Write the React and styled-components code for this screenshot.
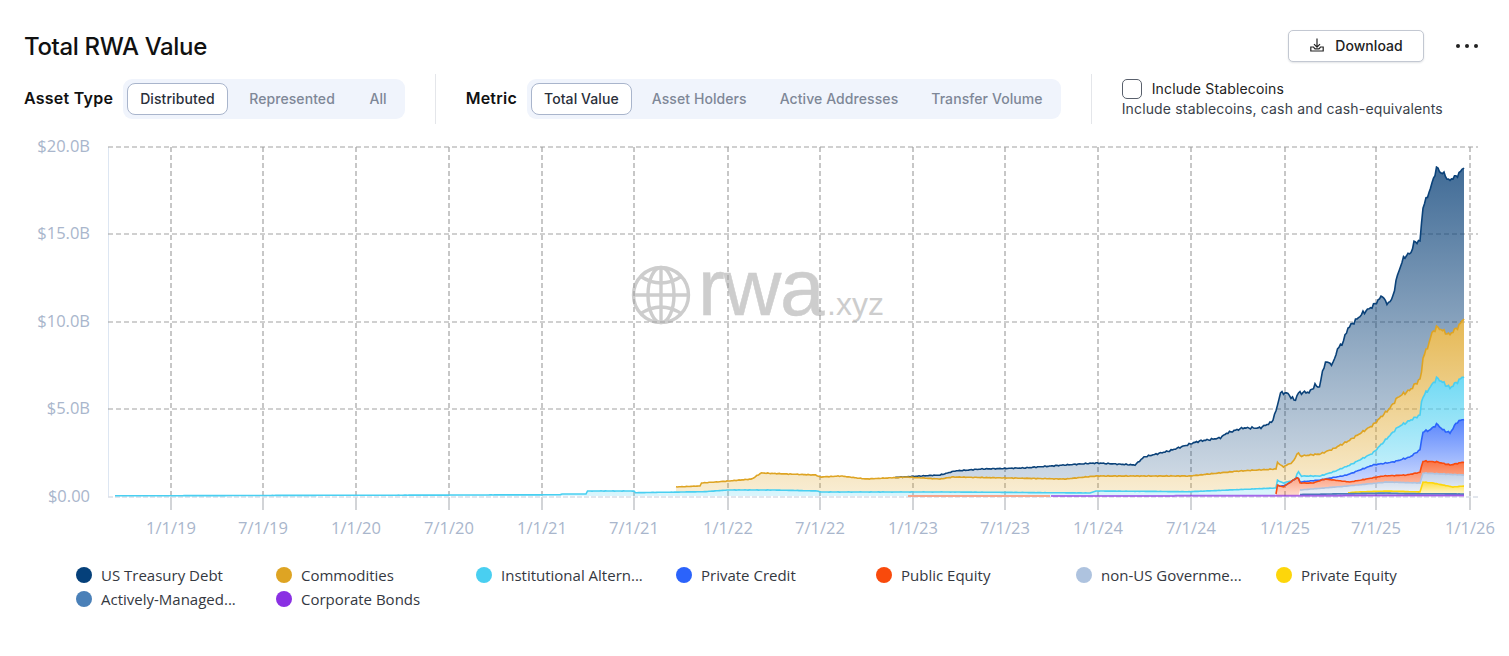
import React from 'react';
import styled, { createGlobalStyle } from 'styled-components';

const GlobalStyle = createGlobalStyle`
  html, body { margin: 0; background: #fff; overflow: hidden; }
  body { font-family: Inter, "Liberation Sans", sans-serif; color: #111; }
`;

const Card = styled.div`
  width: 1509px;
  height: 656px;
  background: #fff;
  padding-top: 30px;
  box-sizing: border-box;
`;

const TopRow = styled.div`
  display: flex;
  align-items: center;
  justify-content: space-between;
  height: 32px;
  padding: 0 30px 0 24px;
`;

const Title = styled.h1`
  margin: 0;
  font-size: 24px;
  font-weight: 500;
  letter-spacing: -0.35px;
`;

const Actions = styled.div`
  display: flex;
  align-items: center;
  gap: 31px;
`;

const DownloadButton = styled.button`
  display: flex;
  align-items: center;
  justify-content: center;
  gap: 10px;
  width: 136px;
  height: 32px;
  padding: 0 0 2px;
  background: #fff;
  border: 1px solid #c3c8d2;
  border-radius: 5px;
  box-shadow: 0 1px 2px rgba(20, 30, 50, 0.12);
  font: 500 14px Inter, sans-serif;
  letter-spacing: 0.05px;
  color: #222;
`;

const Controls = styled.div`
  display: flex;
  align-items: center;
  height: 50px;
  margin-top: 12px;
  padding-left: 24px;
`;

const FilterGroup = styled.div`
  display: flex;
  align-items: center;
  gap: 10px;
`;

const FilterLabel = styled.span`
  padding-bottom: 2px;
  font-size: 16px;
  font-weight: 600;
  letter-spacing: 0.25px;
  white-space: nowrap;
`;

const Tabs = styled.div`
  display: flex;
  align-items: center;
  gap: ${p => p.$gap || 7}px;
  height: 40px;
  padding: 0 5px 0 4px;
  background: #f0f4fc;
  border-radius: 9px;
  box-sizing: border-box;
`;

const Tab = styled.button`
  height: 32px;
  padding: 0 12px 2px;
  box-sizing: border-box;
  background: ${p => (p.$active ? '#fff' : 'transparent')};
  border: 1px solid ${p => (p.$active ? '#a9b5cc' : 'transparent')};
  border-radius: 8px;
  font: 500 14px Inter, sans-serif;
  letter-spacing: 0.08px;
  color: ${p => (p.$active ? '#2a2f3a' : '#7e8797')};
  white-space: nowrap;
`;

const Divider = styled.div`
  width: 1px;
  height: 50px;
  margin: 0 30px;
  background: #e4e6ea;
`;

const StableBlock = styled.div`
  display: flex;
  flex-direction: column;
  font-size: 14px;
  letter-spacing: 0.16px;
  color: #3a3f4a;
`;

const StableRow = styled.label`
  display: flex;
  align-items: center;
  gap: 10px;
  height: 20px;
  color: #222;
`;

const StableLabel = styled.span`
  margin-bottom: 2px;
`;

const Check = styled.input.attrs({ type: 'checkbox' })`
  appearance: none;
  width: 20px;
  height: 20px;
  margin: 0;
  background: #fff;
  border: 1px solid #59606c;
  border-radius: 5px;
`;

const StableHint = styled.div`
  line-height: 20px;
`;

const ChartSvg = styled.svg`
  display: block;
  margin-top: 6px;
`;

const AxisText = styled.text`
  font-family: "Open Sans", sans-serif;
  font-size: 16.5px;
  font-weight: 400;
  fill: #a9b6cc;
`;

const Legend = styled.div`
  display: grid;
  grid-template-columns: repeat(7, 200px);
  grid-auto-rows: 24px;
  margin-top: 23px;
  padding-left: 76px;
`;

const LegendItem = styled.div`
  display: flex;
  align-items: center;
  gap: 9px;
  font-family: "Open Sans", sans-serif;
  font-size: 15px;
  color: #34383f;
  white-space: nowrap;
`;

const Dot = styled.span`
  width: 16px;
  height: 16px;
  border-radius: 50%;
  background: ${p => p.$color};
`;

const X_RIGHT = 1464;
const BASE = 496;

// ordered bottom of the stack first
const series = [
  { name: 'Corporate Bonds', color: '#8a30e3', start: 1050, pts: [[1050, 496], [X_RIGHT, 495.5]] },
  { name: 'Actively-Managed', color: '#4a80b8', start: 1300, pts: [[1300, 494.5], [1387, 493], [1400, 493.5], [X_RIGHT, 494]] },
  { name: 'Private Equity', color: '#fdd60b', start: 1347, pts: [[1347, 493], [1357, 492], [1387, 491], [1421, 492], [1422, 482], [1433, 483], [1453, 487], [X_RIGHT, 486]] },
  { name: 'non-US', color: '#aec3df', start: 1300, pts: [[1300, 490], [1347, 486], [1387, 482], [1421, 483], [1422, 473], [X_RIGHT, 475]] },
  { name: 'Public Equity', color: '#f94a0c', start: 1276, pts: [[1276, 494], [1277, 485], [1283, 487], [1298, 477], [1300, 483], [1313, 483], [1325, 479], [1350, 482], [1383, 476], [1407, 475], [1421, 472], [1422, 461], [1437, 462], [1450, 465], [X_RIGHT, 462]] },
  { name: 'Private Credit', color: '#2b63fb', start: 1277, pts: [[1277, 487], [1300, 482], [1320, 480], [1347, 475], [1373, 465], [1393, 462], [1410, 457], [1421, 449], [1422, 432], [1430, 430], [1437, 424], [1443, 430], [1450, 433], [1457, 422], [X_RIGHT, 419]] },
  { name: 'Institutional', color: '#49cff1', start: 115, pts: [[115, 495.8], [560, 494.8], [562, 494], [586, 494], [587, 491], [634, 491], [635, 492.7], [704, 491.7], [729, 490], [774, 490], [818, 491], [820, 492], [957, 492], [1090, 493], [1096, 491], [1189, 491.7], [1276, 488], [1277, 480], [1283, 483], [1295, 480], [1298, 471], [1301, 476], [1320, 476], [1333, 472], [1350, 465], [1373, 453], [1398, 427], [1420, 415], [1422, 398], [1437, 378], [1450, 388], [X_RIGHT, 376]] },
  { name: 'Commodities', color: '#dea423', start: 675, pts: [[675, 487], [700, 486], [701, 483], [729, 481], [752, 479], [761, 473], [816, 475], [820, 477], [841, 476], [866, 479], [907, 477], [940, 479], [953, 477], [1065, 479], [1096, 476], [1189, 476], [1239, 471], [1276, 469], [1277, 462], [1283, 467], [1293, 462], [1298, 452], [1300, 456], [1320, 454], [1333, 449], [1350, 440], [1373, 425], [1390, 408], [1398, 397], [1410, 390], [1421, 378], [1423, 357], [1427, 349], [1432, 333], [1437, 327], [1445, 332], [1449, 335], [1458, 327], [X_RIGHT, 318]] },
  { name: 'US Treasury Debt', color: '#0b4279', start: 895, pts: [[895, 477.5], [920, 476], [940, 475], [955, 471], [982, 469], [1023, 468], [1065, 465], [1096, 463], [1135, 465], [1144, 457], [1169, 451], [1193, 443], [1200, 441], [1220, 438], [1227, 433], [1243, 428], [1260, 428], [1272, 422], [1277, 408], [1280, 393], [1287, 393], [1295, 401], [1298, 393], [1310, 392], [1315, 385], [1319, 388], [1325, 362], [1333, 364], [1337, 350], [1343, 342], [1348, 328], [1363, 313], [1373, 306], [1383, 295], [1386, 304], [1392, 300], [1398, 273], [1404, 257], [1412, 252], [1413, 243], [1420, 241], [1423, 207], [1430, 190], [1437, 167], [1441, 173], [1445, 174], [1448, 181], [1458, 175], [X_RIGHT, 167]] },
];

const yAt = (pts, x) => {
  for (let i = 1; i < pts.length; i++) {
    if (x <= pts[i][0]) {
      const [x0, y0] = pts[i - 1];
      const [x1, y1] = pts[i];
      return y0 + ((y1 - y0) * (x - x0)) / (x1 - x0);
    }
  }
  return pts[pts.length - 1][1];
};

// small repeatable wobble so the lines read as daily data, scaled by height
const wobble = (x, y) => {
  const h = (BASE - y) / 330;
  return (Math.sin(x * 1.7) + Math.sin(x * 3.1 + 1)) * Math.min(1.1, h * 3);
};

const xs = [];
for (let x = 115; x <= X_RIGHT; x += 1.5) xs.push(x);
xs.push(X_RIGHT);

const stack = (() => {
  const lower = xs.map(() => BASE);
  return series.map(s => {
    const line = [];
    const band = [];
    xs.forEach((x, i) => {
      if (x < s.start) return;
      const raw = yAt(s.pts, x);
      const y = Math.min(raw + wobble(x, raw), lower[i]);
      line.push([x, y]);
      band.push([x, lower[i]]);
      lower[i] = y;
    });
    return { ...s, line, band };
  });
})();

const toPoints = list => list.map(([x, y]) => `${x},${y.toFixed(1)}`).join(' ');

const gridX = [171, 263, 356, 449, 542, 634, 728, 820, 913, 1005, 1098, 1191, 1285, 1376, 1470];
const gridY = [147, 234, 322, 409];
const yLabels = [['$20.0B', 145], ['$15.0B', 232], ['$10.0B', 320], ['$5.0B', 407], ['$0.00', 495]];
const xLabels = ['1/1/19', '7/1/19', '1/1/20', '7/1/20', '1/1/21', '7/1/21', '1/1/22', '7/1/22', '1/1/23', '7/1/23', '1/1/24', '7/1/24', '1/1/25', '7/1/25', '1/1/26'];

const Watermark = () => (
  <g fill="#cdcdcd">
    <g fill="none" stroke="#cdcdcd" strokeWidth="3.4">
      <circle cx="661" cy="295" r="27.5" />
      <ellipse cx="661" cy="295" rx="13" ry="27.5" />
      <line x1="661" y1="267" x2="661" y2="323" />
      <line x1="634" y1="295" x2="689" y2="295" />
      <path d="M640 276 Q661 290 682 276" />
      <path d="M640 314 Q661 300 682 314" />
    </g>
    <text x="698" y="315" fontFamily="Liberation Sans, sans-serif" fontSize="80" letterSpacing="-1.2" stroke="#cdcdcd" strokeWidth="0.5">rwa</text>
    <text x="827" y="315" fontFamily="Liberation Sans, sans-serif" fontSize="32">.xyz</text>
  </g>
);

const Chart = () => (
  <ChartSvg width="1509" height="410" viewBox="0 130 1509 410">
    <defs>
      {stack.map((s, i) => (
        <linearGradient key={s.name} id={`fill${i}`} x1="0" y1="0" x2="0" y2="1">
          <stop offset="0%" stopColor={s.color} stopOpacity="0.78" />
          <stop offset="100%" stopColor={s.color} stopOpacity="0.2" />
        </linearGradient>
      ))}
    </defs>
    <Watermark />
    <line x1="108.5" y1="147" x2="108.5" y2="497" stroke="#dde6f2" />
    {gridX.map(x => (
      <g key={x}>
        <line x1={x} y1="147" x2={x} y2="497" stroke="#a2a2a2" strokeWidth="1.2" strokeDasharray="5 3" />
        <line x1={x} y1="497" x2={x} y2="510" stroke="#b4b7bd" strokeWidth="1.2" />
      </g>
    ))}
    {gridY.map(y => (
      <line key={y} x1="108" y1={y} x2="1478" y2={y} stroke="#a2a2a2" strokeWidth="1.2" strokeDasharray="5 3" />
    ))}
    <line x1="108" y1="497" x2="1478" y2="497" stroke="#d9dee8" strokeWidth="1.5" strokeDasharray="5 2" />
    {stack.map((s, i) => (
      <polygon key={s.name} points={toPoints([...s.line, ...[...s.band].reverse()])} fill={`url(#fill${i})`} />
    ))}
    <line x1="908" y1="496" x2="1050" y2="496" stroke="#f6a68c" strokeWidth="2" />
    {[...stack].reverse().map((s, i) => (
      <polyline
        key={s.name}
        points={toPoints(s.line)}
        fill="none"
        stroke={s.color}
        strokeWidth={i === stack.length - 1 ? 2 : 1.6}
        strokeOpacity={i === stack.length - 1 ? 0.65 : 1}
      />
    ))}
    {yLabels.map(([text, y]) => (
      <AxisText key={text} x="90" y={y} textAnchor="end" dominantBaseline="central">{text}</AxisText>
    ))}
    {xLabels.map((text, i) => (
      <AxisText key={text} x={gridX[i]} y="527" textAnchor="middle" dominantBaseline="central">{text}</AxisText>
    ))}
  </ChartSvg>
);

const legendItems = [
  ['US Treasury Debt', '#05407a'],
  ['Commodities', '#dea423'],
  ['Institutional Altern...', '#49cff1'],
  ['Private Credit', '#2b63fb'],
  ['Public Equity', '#f94a0c'],
  ['non-US Governme...', '#aec3df'],
  ['Private Equity', '#fdd60b'],
  ['Actively-Managed...', '#4a80b8'],
  ['Corporate Bonds', '#8a30e3'],
];

const DownloadIcon = () => (
  <svg width="16" height="16" viewBox="0 0 16 16" fill="none" stroke="#222" strokeWidth="1.2">
    <path d="M8 1.5v8.5M5 7.2 8 10.2l3-3" />
    <path d="M1.8 10v4h12.4v-4h-2.7L10 11.8H6L4.5 10z" />
  </svg>
);

const MoreIcon = () => (
  <svg width="24" height="6" viewBox="0 0 24 6" fill="#222">
    <circle cx="3" cy="3" r="2" />
    <circle cx="12" cy="3" r="2" />
    <circle cx="21" cy="3" r="2" />
  </svg>
);

const App = () => (
  <Card>
    <GlobalStyle />
    <TopRow>
      <Title>Total RWA Value</Title>
      <Actions>
        <DownloadButton><DownloadIcon />Download</DownloadButton>
        <MoreIcon />
      </Actions>
    </TopRow>
    <Controls>
      <FilterGroup>
        <FilterLabel>Asset Type</FilterLabel>
        <Tabs $gap={8.5}>
          <Tab $active>Distributed</Tab>
          <Tab>Represented</Tab>
          <Tab>All</Tab>
        </Tabs>
      </FilterGroup>
      <Divider />
      <FilterGroup>
        <FilterLabel>Metric</FilterLabel>
        <Tabs>
          <Tab $active>Total Value</Tab>
          <Tab>Asset Holders</Tab>
          <Tab>Active Addresses</Tab>
          <Tab>Transfer Volume</Tab>
        </Tabs>
      </FilterGroup>
      <Divider />
      <StableBlock>
        <StableRow><Check /><StableLabel>Include Stablecoins</StableLabel></StableRow>
        <StableHint>Include stablecoins, cash and cash-equivalents</StableHint>
      </StableBlock>
    </Controls>
    <Chart />
    <Legend>
      {legendItems.map(([name, color]) => (
        <LegendItem key={name}><Dot $color={color} />{name}</LegendItem>
      ))}
    </Legend>
  </Card>
);

export default App;
